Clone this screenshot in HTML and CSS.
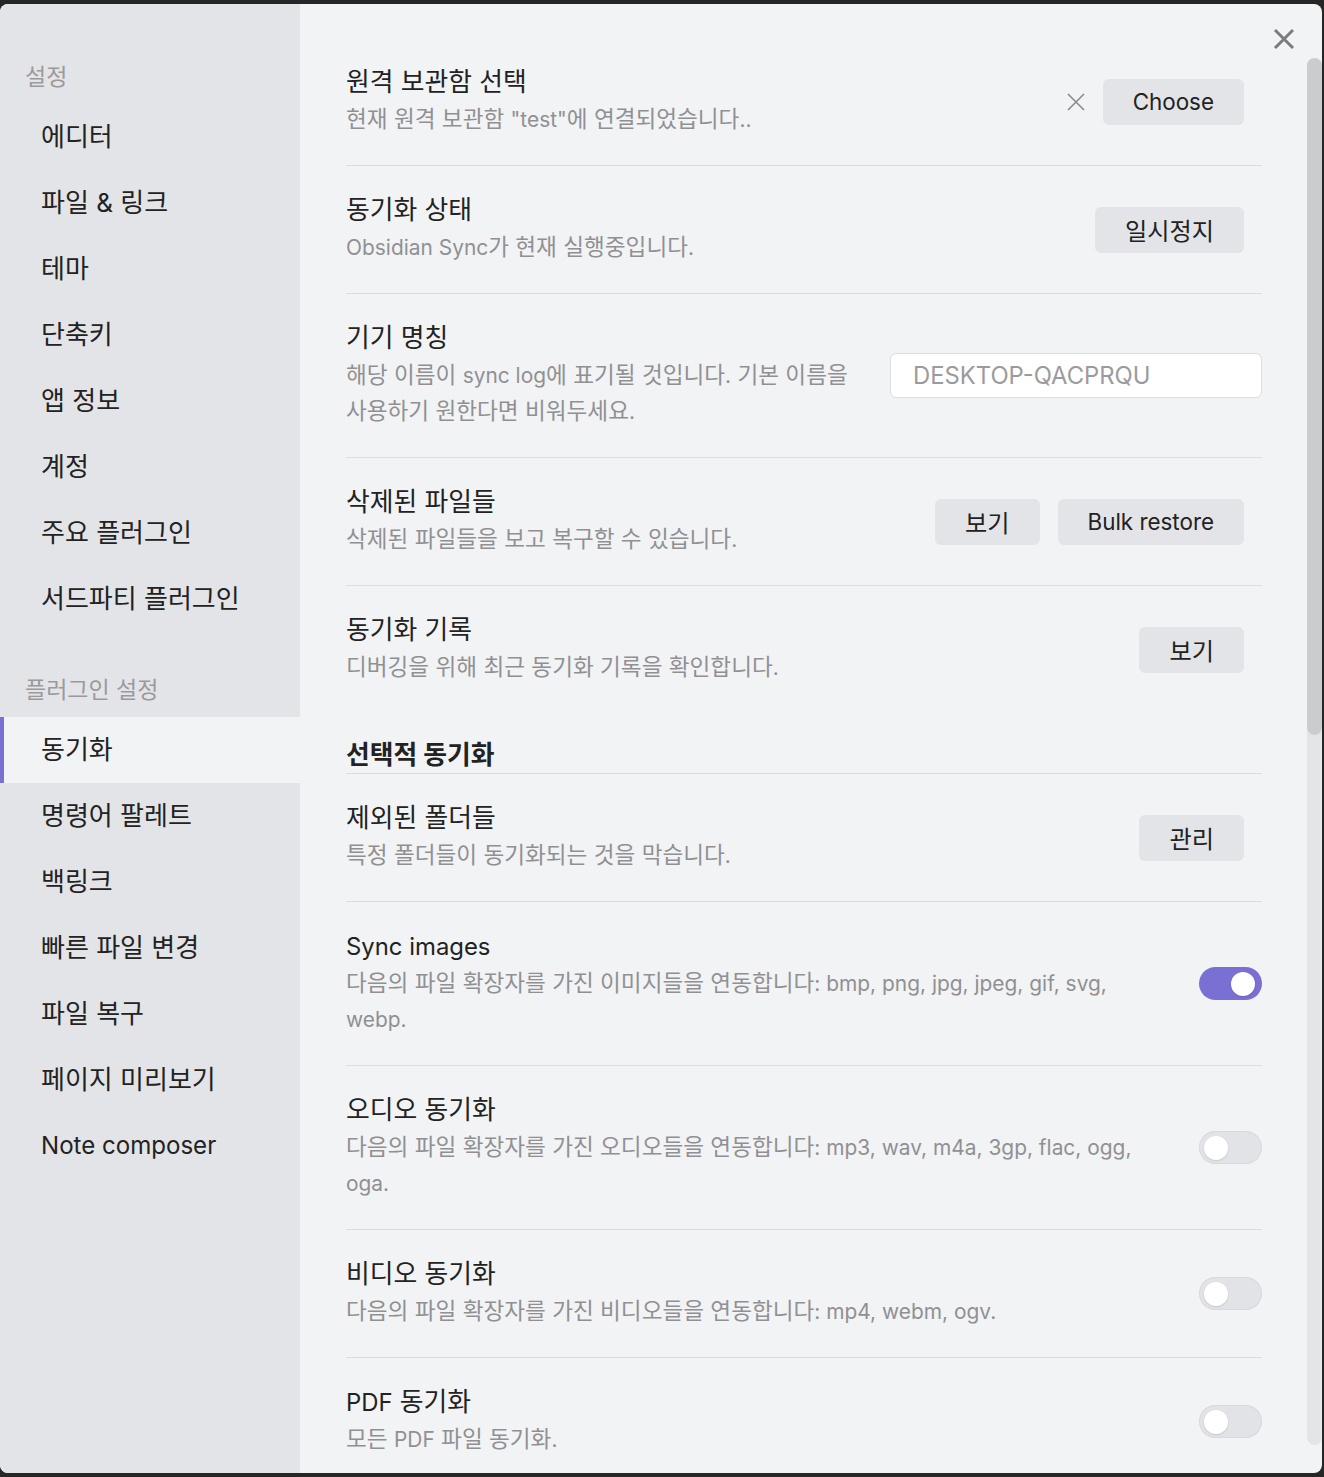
FILE: index.html
```html
<!DOCTYPE html>
<html lang="ko">
<head>
	<meta charset="utf-8">
	<title>설정</title>
	<link rel="stylesheet" href="styles.css">
</head>
<body>

<div class="modal">

	<div class="sidebar">
		<div class="nav-heading first">설정</div>
		<div class="nav-item">에디터</div>
		<div class="nav-item">파일 &amp; 링크</div>
		<div class="nav-item">테마</div>
		<div class="nav-item">단축키</div>
		<div class="nav-item">앱 정보</div>
		<div class="nav-item">계정</div>
		<div class="nav-item">주요 플러그인</div>
		<div class="nav-item">서드파티 플러그인</div>

		<div class="nav-heading">플러그인 설정</div>
		<div class="nav-item is-active">동기화</div>
		<div class="nav-item">명령어 팔레트</div>
		<div class="nav-item">백링크</div>
		<div class="nav-item">빠른 파일 변경</div>
		<div class="nav-item">파일 복구</div>
		<div class="nav-item">페이지 미리보기</div>
		<div class="nav-item"><span class="en">Note composer</span></div>
	</div>

	<div class="content">
		<div class="pane">

			<div class="setting-item">
				<div class="setting-info">
					<div class="setting-name">원격 보관함 선택</div>
					<div class="setting-desc">현재 원격 보관함 <span class="en">"test"</span>에 연결되었습니다<span class="en">..</span></div>
				</div>
				<div class="setting-control">
					<span class="clear-icon">
						<svg width="20" height="20" viewBox="0 0 20 20"><path d="M2 2 L18 18 M18 2 L2 18" stroke="#8a8a8a" stroke-width="1.6" fill="none"/></svg>
					</span>
					<button class="btn"><span class="en">Choose</span></button>
				</div>
			</div>

			<div class="setting-item">
				<div class="setting-info">
					<div class="setting-name">동기화 상태</div>
					<div class="setting-desc"><span class="en">Obsidian Sync</span>가 현재 실행중입니다<span class="en">.</span></div>
				</div>
				<div class="setting-control">
					<button class="btn">일시정지</button>
				</div>
			</div>

			<div class="setting-item">
				<div class="setting-info">
					<div class="setting-name">기기 명칭</div>
					<div class="setting-desc">해당 이름이 <span class="en">sync log</span>에 표기될 것입니다<span class="en">.</span> 기본 이름을 사용하기 원한다면 비워두세요<span class="en">.</span></div>
				</div>
				<div class="setting-control">
					<input class="text-input" type="text" placeholder="DESKTOP-QACPRQU">
				</div>
			</div>

			<div class="setting-item">
				<div class="setting-info">
					<div class="setting-name">삭제된 파일들</div>
					<div class="setting-desc">삭제된 파일들을 보고 복구할 수 있습니다<span class="en">.</span></div>
				</div>
				<div class="setting-control">
					<button class="btn">보기</button>
					<button class="btn"><span class="en">Bulk restore</span></button>
				</div>
			</div>

			<div class="setting-item">
				<div class="setting-info">
					<div class="setting-name">동기화 기록</div>
					<div class="setting-desc">디버깅을 위해 최근 동기화 기록을 확인합니다<span class="en">.</span></div>
				</div>
				<div class="setting-control">
					<button class="btn">보기</button>
				</div>
			</div>

			<div class="setting-heading">선택적 동기화</div>

			<div class="setting-item">
				<div class="setting-info">
					<div class="setting-name">제외된 폴더들</div>
					<div class="setting-desc">특정 폴더들이 동기화되는 것을 막습니다<span class="en">.</span></div>
				</div>
				<div class="setting-control">
					<button class="btn">관리</button>
				</div>
			</div>

			<div class="setting-item">
				<div class="setting-info">
					<div class="setting-name"><span class="en">Sync images</span></div>
					<div class="setting-desc">다음의 파일 확장자를 가진 이미지들을 연동합니다<span class="en">: bmp, png, jpg, jpeg, gif, svg, webp.</span></div>
				</div>
				<div class="setting-control">
					<div class="toggle is-on"><div class="knob"></div></div>
				</div>
			</div>

			<div class="setting-item">
				<div class="setting-info">
					<div class="setting-name">오디오 동기화</div>
					<div class="setting-desc">다음의 파일 확장자를 가진 오디오들을 연동합니다<span class="en">: mp3, wav, m4a, 3gp, flac, ogg, oga.</span></div>
				</div>
				<div class="setting-control">
					<div class="toggle"><div class="knob"></div></div>
				</div>
			</div>

			<div class="setting-item">
				<div class="setting-info">
					<div class="setting-name">비디오 동기화</div>
					<div class="setting-desc">다음의 파일 확장자를 가진 비디오들을 연동합니다<span class="en">: mp4, webm, ogv.</span></div>
				</div>
				<div class="setting-control">
					<div class="toggle"><div class="knob"></div></div>
				</div>
			</div>

			<div class="setting-item">
				<div class="setting-info">
					<div class="setting-name"><span class="en">PDF</span> 동기화</div>
					<div class="setting-desc">모든 <span class="en">PDF</span> 파일 동기화<span class="en">.</span></div>
				</div>
				<div class="setting-control">
					<div class="toggle"><div class="knob"></div></div>
				</div>
			</div>

		</div>

		<div class="scroll-track"><div class="scroll-thumb"></div></div>
	</div>

	<div class="close-btn">
		<svg width="22" height="22" viewBox="0 0 22 22"><path d="M2 2 L20 20 M20 2 L2 20" stroke="#7c7c7c" stroke-width="3" fill="none"/></svg>
	</div>

</div>

</body>
</html>
```

FILE: styles.css
```css
body {
	margin: 0;
	background: #262626;
	font-family: "Inter", "Noto Sans CJK KR", sans-serif;
	color: #222222;
}

/* korean glyphs render larger than latin in the original, so the
   base sizes below are set for hangul and latin runs are scaled down */
.en {
	font-size: 0.926em;
	line-height: 1;
}

.modal {
	position: relative;
	margin-top: 4px;
	width: 1322px;
	height: 1469px;
	display: flex;
	border-radius: 8px;
	overflow: hidden;
	background: #f2f3f5;
}

/* sidebar */

.sidebar {
	width: 300px;
	flex: none;
	background: #e3e4e8;
}

.nav-heading {
	height: 30px;
	line-height: 30px;
	padding: 0 25px;
	margin: 43px 0 12px;
	font-size: 23px;
	color: #9a9a9c;
}

.nav-heading.first {
	margin-top: 58px;
}

.nav-item {
	height: 66px;
	display: flex;
	align-items: center;
	padding-left: 41px;
	font-size: 26px;
	line-height: 32px;
	color: #222222;
}

.nav-item.is-active {
	background: #f2f3f5;
	box-shadow: inset 4px 0 0 #7a6fd3;
}

/* content */

.content {
	flex: 1;
	display: flex;
	min-width: 0;
}

.pane {
	flex: 1;
	min-width: 0;
	padding: 34px 45px 0 46px;
	overflow: hidden;
}

.setting-item {
	display: flex;
	align-items: center;
	gap: 40px;
	padding: 28px 0;
	border-top: 1px solid #dcdde1;
}

.setting-item:first-child,
.setting-heading + .setting-item {
	border-top: none;
}

.setting-info {
	flex: 1;
	min-width: 0;
}

.setting-name {
	font-size: 25.8px;
	line-height: 32px;
	color: #222222;
}

.setting-desc {
	margin-top: 3px;
	font-size: 22.6px;
	line-height: 36px;
	color: #909093;
}

.setting-control {
	display: flex;
	align-items: center;
	flex: none;
}

.setting-heading {
	padding: 26px 0 2px;
	font-size: 25.8px;
	line-height: 32px;
	font-weight: 700;
	border-bottom: 1px solid #dcdde1;
}

.btn {
	height: 46px;
	padding: 0 30px;
	margin-right: 18px;
	border: none;
	border-radius: 6px;
	background: #e3e4e8;
	font-family: "Inter", "Noto Sans CJK KR", sans-serif;
	font-size: 24.2px;
	color: #222222;
}

.clear-icon {
	display: flex;
	margin-right: 17px;
}

.text-input {
	width: 372px;
	height: 45px;
	box-sizing: border-box;
	padding: 0 22px;
	border: 1px solid #dcdde1;
	border-radius: 6px;
	background: #ffffff;
	font-family: "Inter", "Noto Sans CJK KR", sans-serif;
	font-size: 23.8px;
}

.text-input::placeholder {
	color: #9b9b9e;
}

.toggle {
	width: 63px;
	height: 33px;
	box-sizing: border-box;
	padding: 0 5px;
	border-radius: 17px;
	background: #e2e3e7;
	box-shadow: inset 0 0 0 1px #d8d9dd;
	display: flex;
	align-items: center;
}

.toggle .knob {
	width: 24px;
	height: 24px;
	border-radius: 50%;
	background: #ffffff;
	box-shadow: 0 1px 2px rgba(0, 0, 0, 0.12);
}

.toggle.is-on {
	background: #7a6fd3;
	box-shadow: none;
	justify-content: flex-end;
	padding-right: 7px;
}

/* scrollbar */

.scroll-track {
	width: 15px;
	flex: none;
	margin: 54px 0 28px;
	border-radius: 8px;
	background: #e4e5e8;
}

.scroll-thumb {
	height: 677px;
	border-radius: 8px;
	background: #cbccd0;
}

.close-btn {
	position: absolute;
	top: 24px;
	right: 27px;
	display: flex;
}
```
